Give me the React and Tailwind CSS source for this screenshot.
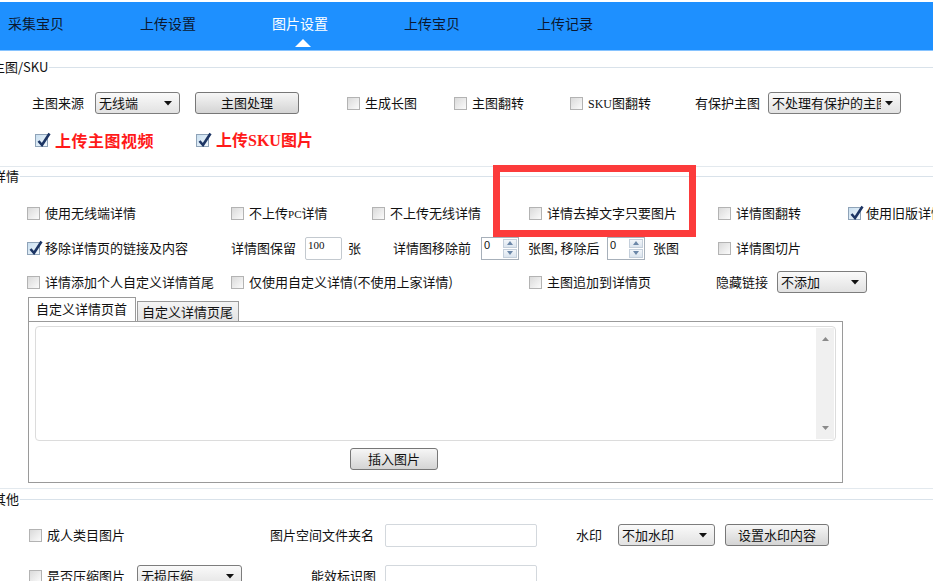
import React from "react";

const FONT = { fontFamily: '"Noto Sans CJK SC", "Liberation Sans", sans-serif' };

function Cb({ checked }) {
  return (
    <span
      className={
        "relative inline-block w-[13px] h-[13px] shrink-0 border " +
        (checked
          ? "border-[#8fa3b8] bg-linear-to-br from-[#c9dff0] to-[#f2f8fc]"
          : "border-[#b3b3b3] bg-linear-to-br from-[#dadada] to-[#fbfbfb]")
      }
    >
      {checked && (
        <svg className="absolute left-[1px] top-[-3px]" width="14" height="15" viewBox="0 0 14 15">
          <path d="M1.5 9 L5 13 L12.5 1.5" fill="none" stroke="#1d3564" strokeWidth="2.6" strokeLinejoin="miter" />
        </svg>
      )}
    </span>
  );
}

function CbLabel({ checked, children, w, gap = "ml-[5px]", textClass = "" }) {
  return (
    <div className={"flex items-center shrink-0 whitespace-nowrap " + w}>
      <Cb checked={checked} />
      <span className={gap + " " + textClass}>{children}</span>
    </div>
  );
}

function Arrow() {
  return (
    <svg width="8" height="5" viewBox="0 0 8 5" className="shrink-0 ml-[4px]">
      <path d="M0 0 L8 0 L4 4.5 Z" fill="#111" />
    </svg>
  );
}

function Select({ w, children }) {
  return (
    <div
      className={
        "h-[22px] shrink-0 border border-[#7d7d7d] rounded-[3px] bg-linear-to-b from-[#fafafa] to-[#e2e2e2] flex items-center pl-[3px] pr-[7px] overflow-hidden " +
        w
      }
    >
      <span className="flex-1 overflow-hidden whitespace-nowrap leading-[20px]">{children}</span>
      <Arrow />
    </div>
  );
}

function Btn({ w, children }) {
  return (
    <div
      className={
        "h-[22px] shrink-0 border border-[#777] rounded-[3px] bg-linear-to-b from-[#f6f6f6] to-[#d4d4d4] flex items-center justify-center whitespace-nowrap " +
        w
      }
    >
      {children}
    </div>
  );
}

function Spinner() {
  return (
    <div className="w-[38px] h-[23px] shrink-0 border border-[#a7b0ba] bg-white flex">
      <span className="flex-1 pl-[2px] pt-[1px] text-[11px] leading-[12px]" style={{ fontFamily: '"Liberation Sans", sans-serif' }}>
        0
      </span>
      <div className="w-[14px] my-[1px] mr-[1px] flex flex-col gap-[1px]">
        <div className="flex-1 bg-linear-to-b from-[#f2f6fa] to-[#dbe4ee] border border-[#c4cfdb] flex items-center justify-center">
          <svg width="6" height="4" viewBox="0 0 6 4"><path d="M0 4 L3 0 L6 4 Z" fill="#6b87a8" /></svg>
        </div>
        <div className="flex-1 bg-linear-to-b from-[#f2f6fa] to-[#dbe4ee] border border-[#c4cfdb] flex items-center justify-center">
          <svg width="6" height="4" viewBox="0 0 6 4"><path d="M0 0 L6 0 L3 4 Z" fill="#6b87a8" /></svg>
        </div>
      </div>
    </div>
  );
}

function SectionLabel({ children, ml }) {
  return (
    <div className="h-[18px] flex items-center">
      <span className={"whitespace-nowrap leading-[18px] " + ml}>{children}</span>
      <div className="flex-1 h-px bg-[#d9e2ea] ml-[1px]" />
    </div>
  );
}

const navItems = ["采集宝贝", "上传设置", "图片设置", "上传宝贝", "上传记录"];

export default function App() {
  return (
    <div className="relative w-[933px] h-[581px] overflow-hidden bg-white text-[13px] text-[#111]" style={FONT}>
      {/* header */}
      <div className="h-[2px] bg-white" />
      <div className="h-[49px] bg-[#1e90ff] border-b border-[#86c3ff] flex pl-[8px]">
        {navItems.map((t, i) => (
          <div key={t} className={"relative shrink-0 " + (i === 3 ? "w-[133px]" : "w-[132px]")}>
            <div
              className={
                "pt-[11px] text-[14px] leading-[20px] whitespace-nowrap " +
                (i === 2 ? "text-white" : "text-[#0b1830]")
              }
            >
              {t}
            </div>
            {i === 2 && (
              <div className="absolute left-[23px] top-[37px] w-0 h-0 border-l-[8px] border-r-[8px] border-b-[8px] border-l-transparent border-r-transparent border-b-white" />
            )}
          </div>
        ))}
      </div>

      {/* 主图/SKU */}
      <div className="mt-[7px]">
        <SectionLabel ml="ml-[-8px]">主图/SKU</SectionLabel>
      </div>

      <div className="mt-[16px] h-[22px] flex items-center pl-[32px]">
        <span className="w-[63px] shrink-0 whitespace-nowrap">主图来源</span>
        <Select w="w-[85px]">无线端</Select>
        <div className="w-[15px] shrink-0" />
        <Btn w="w-[104px]">主图处理</Btn>
        <div className="w-[48px] shrink-0" />
        <CbLabel w="w-[107px]">生成长图</CbLabel>
        <CbLabel w="w-[116px]">主图翻转</CbLabel>
        <CbLabel w="w-[125px]">
          <span style={{ fontFamily: '"Liberation Serif", serif' }} className="text-[12px]">SKU</span>图翻转
        </CbLabel>
        <span className="w-[73px] shrink-0 whitespace-nowrap">有保护主图</span>
        <Select w="w-[133px]">不处理有保护的主图片</Select>
      </div>

      <div className="mt-[16px] h-[20px] flex items-center pl-[35px]">
        <CbLabel checked w="w-[161px]" gap="ml-[7px]" textClass="text-[16px] font-bold text-[#ff1a1a] leading-[20px] tracking-[0.5px]">
          上传主图视频
        </CbLabel>
        <CbLabel checked w="w-[200px]" gap="ml-[7px]" textClass="text-[16px] font-bold text-[#ff1a1a] leading-[20px]">
          上传<span style={{ fontFamily: '"Liberation Serif", serif' }}>SKU</span>图片
        </CbLabel>
      </div>

      {/* 详情 */}
      <div className="mt-[16px] h-px bg-[#e3e9ee]" />
      <SectionLabel ml="ml-[-7px]">详情</SectionLabel>

      <div className="mt-[17px] h-[22px] flex items-center pl-[27px]">
        <CbLabel w="w-[204px]">使用无线端详情</CbLabel>
        <CbLabel w="w-[141px]">
          不上传<span className="text-[11px]" style={{ fontFamily: '"Liberation Serif", serif' }}>PC</span>详情
        </CbLabel>
        <CbLabel w="w-[157px]">不上传无线详情</CbLabel>
        <CbLabel w="w-[189px]">详情去掉文字只要图片</CbLabel>
        <CbLabel w="w-[130px]">详情图翻转</CbLabel>
        <CbLabel checked w="w-[120px]">使用旧版详情</CbLabel>
      </div>

      <div className="mt-[12px] h-[24px] flex items-center pl-[27px]">
        <CbLabel checked w="w-[204px]">移除详情页的链接及内容</CbLabel>
        <span className="w-[74px] shrink-0 whitespace-nowrap">详情图保留</span>
        <div className="w-[37px] h-[23px] shrink-0 border border-[#c3c9cf] rounded-[2px] bg-white pl-[2px] pt-[1px] text-[11px] leading-[12px]" style={{ fontFamily: '"Liberation Serif", serif' }}>
          100
        </div>
        <span className="w-[51px] shrink-0 pl-[6px]">张</span>
        <span className="w-[88px] shrink-0 whitespace-nowrap">详情图移除前</span>
        <Spinner />
        <span className="w-[88px] shrink-0 pl-[9px] whitespace-nowrap">张图, 移除后</span>
        <Spinner />
        <span className="w-[73px] shrink-0 pl-[8px] whitespace-nowrap">张图</span>
        <CbLabel w="w-[120px]">详情图切片</CbLabel>
      </div>

      <div className="mt-[11px] h-[22px] flex items-center pl-[27px]">
        <CbLabel w="w-[204px]">详情添加个人自定义详情首尾</CbLabel>
        <CbLabel w="w-[298px]">仅使用自定义详情(不使用上家详情)</CbLabel>
        <CbLabel w="w-[187px]">主图追加到详情页</CbLabel>
        <span className="w-[61px] shrink-0 whitespace-nowrap">隐藏链接</span>
        <Select w="w-[90px]">不添加</Select>
      </div>

      {/* tabs */}
      <div className="mt-[5px] ml-[28px] w-[815px]">
        <div className="flex items-end h-[23px]">
          <div className="relative z-10 w-[108px] h-[24px] border border-b-0 border-[#9a9a9a] bg-white pl-[7px] leading-[22px] whitespace-nowrap">
            自定义详情页首
          </div>
          <div className="ml-[1px] w-[102px] h-[20px] border border-b-0 border-[#9a9a9a] bg-linear-to-b from-[#f4f4f4] to-[#e4e4e4] pl-[4px] leading-[19px] whitespace-nowrap">
            自定义详情页尾
          </div>
        </div>
        <div className="h-[162px] border border-[#9a9a9a] bg-white pt-[4px] px-[6px]">
          <div className="h-[115px] border border-[#dcdcdc] rounded-[4px] flex justify-end p-[1px]">
            <div className="w-[18px] bg-[#f0f0f0] flex flex-col items-center justify-between py-[9px]">
              <svg width="7" height="4" viewBox="0 0 7 4"><path d="M0 4 L3.5 0 L7 4 Z" fill="#8a8a8a" /></svg>
              <svg width="7" height="4" viewBox="0 0 7 4"><path d="M0 0 L7 0 L3.5 4 Z" fill="#8a8a8a" /></svg>
            </div>
          </div>
          <div className="mt-[7px] ml-[315px]">
            <Btn w="w-[88px]">插入图片</Btn>
          </div>
        </div>
      </div>

      {/* 其他 */}
      <div className="mt-[5px] h-px bg-[#e3e9ee]" />
      <div className="mt-[1px]">
        <SectionLabel ml="ml-[-7px]">其他</SectionLabel>
      </div>

      <div className="mt-[15px] h-[24px] flex items-center pl-[29px]">
        <CbLabel w="w-[241px]">成人类目图片</CbLabel>
        <span className="w-[115px] shrink-0 whitespace-nowrap">图片空间文件夹名</span>
        <div className="w-[152px] h-[23px] shrink-0 border border-[#d3d8dd] rounded-[2px] bg-white" />
        <div className="w-[39px] shrink-0" />
        <span className="w-[42px] shrink-0 whitespace-nowrap">水印</span>
        <Select w="w-[97px]">不加水印</Select>
        <div className="w-[10px] shrink-0" />
        <Btn w="w-[104px]">设置水印内容</Btn>
      </div>

      <div className="mt-[17px] h-[24px] flex items-center pl-[29px]">
        <CbLabel w="w-[108px]">是否压缩图片</CbLabel>
        <Select w="w-[105px]">无损压缩</Select>
        <span className="w-[143px] shrink-0 pr-[9px] text-right whitespace-nowrap">能效标识图</span>
        <div className="w-[152px] h-[23px] shrink-0 border border-[#d3d8dd] rounded-[2px] bg-white" />
      </div>

      {/* red highlight box overlay */}
      <div className="absolute left-[493px] top-[165px] w-[203px] h-[72px] border-[7px] border-[#fc3b3b]" />
    </div>
  );
}
